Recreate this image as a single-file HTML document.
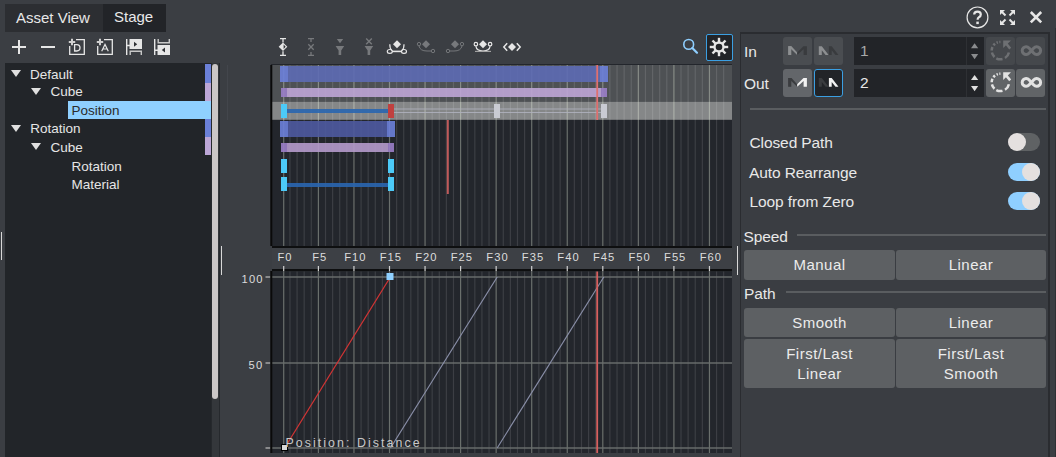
<!DOCTYPE html>
<html><head><meta charset="utf-8">
<style>
html,body{margin:0;padding:0;}
body{width:1056px;height:457px;overflow:hidden;position:relative;background:#3b3e43;font-family:"Liberation Sans",sans-serif;color:#e6e6e6;}
.a{position:absolute;}
.t{position:absolute;white-space:nowrap;line-height:1;}
.tab{position:absolute;top:4px;height:28px;}
.mono{font-family:"Liberation Mono",monospace;}
.btn{position:absolute;background:#5d6063;border-radius:3px;color:#ececec;font-size:15px;text-align:center;line-height:19px;}
.lbl{position:absolute;font-size:15.5px;color:#e8e8e8;white-space:nowrap;line-height:1;letter-spacing:-0.1px;}
.tgl{position:absolute;width:32px;height:18px;border-radius:9px;left:1008px;}
.knob{position:absolute;top:0;width:18px;height:18px;border-radius:9px;background:#e4e0df;}
.tree{position:absolute;font-size:13.5px;color:#e6e6e6;white-space:nowrap;line-height:1;}
.tri{position:absolute;width:0;height:0;border-left:5.6px solid transparent;border-right:5.6px solid transparent;border-top:7.3px solid #e0e0e0;}
.mb{position:absolute;width:29px;height:28px;border-radius:3px;background:#4a4d51;}
</style></head><body>

<div class="tab" style="left:5px;width:98px;background:#2c2e32;"></div>
<div class="tab" style="left:103px;width:63px;background:#222428;"></div>
<div class="t" style="left:16px;top:9.5px;font-size:15px;color:#e8e8e8;">Asset View</div>
<div class="t" style="left:114px;top:9.3px;font-size:15px;color:#e8e8e8;">Stage</div>
<svg class="a" style="left:0;top:0" width="180" height="64" viewBox="0 0 180 64" fill="none" stroke="#e6e6e6">
<path d="M12 47H26M19 40V54" stroke-width="2"/>
<path d="M41 47H55" stroke-width="2"/>
<path d="M76 39.7H84.3V54.3H69.7V46" stroke-width="1.3"/>
<path d="M68.8 42H75.2M72 38.8V45.2" stroke-width="2" stroke="#d0d0d0"/>
<path d="M74.6 44.7H76.8Q80 44.7 80 47.85Q80 51 76.8 51H74.6Z" stroke-width="1.3"/>
<path d="M104 39.7H112.3V54.3H97.7V46" stroke-width="1.3"/>
<path d="M96.8 42H103.2M100 38.8V45.2" stroke-width="2" stroke="#d0d0d0"/>
<path d="M101.7 51.3L105 44.4L108.3 51.3M102.8 49H107.2" stroke-width="1.2"/>
<path d="M126.7 39V55M127 45.5H130" stroke-width="1.4"/>
<rect x="129.5" y="39" width="12.5" height="10" fill="#e6e6e6" stroke="none"/>
<path d="M134 41.8L137.2 44.3L134 46.8Z" fill="#2e3034" stroke="none"/>
<path d="M130.2 55V51.2H141.3V55" stroke-width="1.4" stroke="#c8c8c8"/>
<path d="M154.7 39V55M155 50.2H158" stroke-width="1.4"/>
<rect x="157.5" y="45" width="12.5" height="10" fill="#e6e6e6" stroke="none"/>
<path d="M165 47.6L161.8 50.1L165 52.6Z" fill="#2e3034" stroke="none"/>
<path d="M158.2 39V42.8H169.3V39" stroke-width="1.4" stroke="#c8c8c8"/>
</svg>
<svg class="a" style="left:260px;top:30px" width="480" height="34" viewBox="260 30 480 34" fill="none">
<g stroke="#e6e6e6" stroke-width="1.3">
<path d="M280 38.6H286M283 38.6V42.5M283 51.2V55.4M280 55.4H286"/>
</g>
<path d="M283 42.5L287.3 46.8L283 51.1L278.7 46.8Z" fill="#e6e6e6"/>
<path d="M283.6 44.6L285.6 46.8L283.6 49Z" fill="#2e3034"/>
<g stroke="#77797c" stroke-width="1.3">
<path d="M308 38.6H314M311 38.6V42M311 52V55.4M308 55.4H314M308.3 44.2L313.7 49.8M313.7 44.2L308.3 49.8"/>
</g>
<path d="M336.8 39H343.2L340 43.2Z" fill="#77797c"/>
<path d="M335.6 46H344.2L341.2 50.4V55H338.6V50.4Z" fill="#77797c"/>
<path d="M366.2 38.6L371.8 44.2M371.8 38.6L366.2 44.2" stroke="#77797c" stroke-width="1.4"/>
<path d="M364.6 46H373.2L370.2 50.4V55H367.6V50.4Z" fill="#77797c"/>
<path d="M397 40.2L401 44.2L397 48.2L393 44.2Z" fill="#e6e6e6"/>
<g stroke="#e6e6e6" stroke-width="1.2">
<path d="M389.8 44.2Q389.6 48.5 392 50.6M404 44.2Q404.2 48.5 401.8 50.6"/>
<path d="M392 51.4H401.8" stroke-width="1.6"/>
<ellipse cx="389.8" cy="51.4" rx="2.5" ry="1.9"/>
<ellipse cx="404" cy="51.4" rx="2.5" ry="1.9"/>
</g>
<path d="M426 40.2L430 44.2L426 48.2L422 44.2Z" fill="#77797c"/>
<g stroke="#77797c" stroke-width="0.95">
<circle cx="419" cy="44.1" r="1.7"/>
<circle cx="433" cy="51" r="1.7"/>
<path d="M419 46Q420 51 427 51H431"/>
</g>
<path d="M455 40.2L459 44.2L455 48.2L451 44.2Z" fill="#77797c"/>
<g stroke="#77797c" stroke-width="0.95">
<circle cx="462" cy="44.1" r="1.7"/>
<circle cx="448" cy="51" r="1.7"/>
<path d="M462 46Q461 51 454 51H450"/>
</g>
<path d="M483 40.2L487 44.2L483 48.2L479 44.2Z" fill="#e6e6e6"/>
<g stroke="#e6e6e6" stroke-width="1.2">
<circle cx="475.9" cy="44.2" r="1.75"/>
<circle cx="490.1" cy="44.2" r="1.75"/>
<path d="M475.9 46.1Q476.5 51 483 51Q489.5 51 490.1 46.1"/>
</g>
<path d="M475 51.4H491" stroke="#a8a8a8" stroke-width="1.1"/>
<path d="M507.2 43.2L503.8 47L507.2 50.8M516.8 43.2L520.2 47L516.8 50.8" stroke="#e6e6e6" stroke-width="1.5"/>
<path d="M512 43L516 47L512 51L508 47Z" fill="#e6e6e6"/>
<circle cx="688.7" cy="44.4" r="4.9" stroke="#8fcfff" stroke-width="1.6"/>
<path d="M692.3 48L697 52.7" stroke="#8fcfff" stroke-width="2.2" stroke-linecap="round"/>
</svg>
<div class="a" style="left:5px;top:63px;width:214px;height:394px;background:#222529;"></div>
<div class="a" style="left:205px;top:64px;width:6px;height:19px;background:#6b80d8;"></div>
<div class="a" style="left:205px;top:83px;width:6px;height:36px;background:#bca6d6;"></div>
<div class="a" style="left:205px;top:119px;width:6px;height:18px;background:#6b80d8;"></div>
<div class="a" style="left:205px;top:137px;width:6px;height:18px;background:#bca6d6;"></div>
<div class="a" style="left:68px;top:101px;width:143px;height:18px;background:#8fd0ff;"></div>
<div class="a" style="left:211px;top:63px;width:7px;height:394px;background:#34373b;border-left:1px solid #26292d;border-right:1px solid #26292d;"></div>
<div class="a" style="left:212px;top:64px;width:6px;height:335px;background:#cac6c6;border-radius:3px;"></div>
<div class="tri" style="left:10.5px;top:70.3px;"></div>
<div class="tree" style="left:30px;top:67.57px;">Default</div>
<div class="tri" style="left:31px;top:88px;"></div>
<div class="tree" style="left:50.5px;top:85.07px;">Cube</div>
<div class="tree" style="left:71.5px;top:104.17px;color:#2b2b2b;">Position</div>
<div class="tri" style="left:10.6px;top:124.9px;"></div>
<div class="tree" style="left:30.2px;top:122.37px;">Rotation</div>
<div class="tri" style="left:30.8px;top:143.2px;"></div>
<div class="tree" style="left:50.6px;top:140.57px;">Cube</div>
<div class="tree" style="left:71.6px;top:159.97px;">Rotation</div>
<div class="tree" style="left:71.6px;top:177.87px;">Material</div>
<div class="a" style="left:227px;top:65px;width:1px;height:55px;background:#43464c;"></div>
<div class="a" style="left:1px;top:232px;width:1px;height:28px;background:#d8d8d8;"></div>
<div class="a" style="left:221px;top:246px;width:1px;height:29px;background:#d8d8d8;"></div>
<div class="a" style="left:737px;top:246px;width:1px;height:29px;background:#d8d8d8;"></div>
<svg class="a" style="left:0;top:0" width="1056" height="457" viewBox="0 0 1056 457">
<rect x="271" y="64" width="461" height="182" fill="#23262c"/>
<rect x="272" y="65" width="460" height="36" fill="#4e5154"/>
<rect x="272" y="101.5" width="460" height="18.3" fill="#858788"/>
<rect x="283.10" y="65" width="1.2" height="181" fill="#f2fbe8" opacity="0.34"/>
<rect x="289.36" y="65" width="1.2" height="181" fill="#fff" opacity="0.115"/>
<rect x="296.47" y="65" width="1.2" height="181" fill="#fff" opacity="0.115"/>
<rect x="303.58" y="65" width="1.2" height="181" fill="#fff" opacity="0.115"/>
<rect x="310.69" y="65" width="1.2" height="181" fill="#fff" opacity="0.115"/>
<rect x="317.80" y="65" width="1.2" height="181" fill="#f2fbe8" opacity="0.34"/>
<rect x="324.91" y="65" width="1.2" height="181" fill="#fff" opacity="0.115"/>
<rect x="332.02" y="65" width="1.2" height="181" fill="#fff" opacity="0.115"/>
<rect x="339.13" y="65" width="1.2" height="181" fill="#fff" opacity="0.115"/>
<rect x="346.24" y="65" width="1.2" height="181" fill="#fff" opacity="0.115"/>
<rect x="353.35" y="65" width="1.2" height="181" fill="#f2fbe8" opacity="0.34"/>
<rect x="360.46" y="65" width="1.2" height="181" fill="#fff" opacity="0.115"/>
<rect x="367.57" y="65" width="1.2" height="181" fill="#fff" opacity="0.115"/>
<rect x="374.68" y="65" width="1.2" height="181" fill="#fff" opacity="0.115"/>
<rect x="381.79" y="65" width="1.2" height="181" fill="#fff" opacity="0.115"/>
<rect x="388.90" y="65" width="1.2" height="181" fill="#f2fbe8" opacity="0.34"/>
<rect x="396.01" y="65" width="1.2" height="181" fill="#fff" opacity="0.115"/>
<rect x="403.12" y="65" width="1.2" height="181" fill="#fff" opacity="0.115"/>
<rect x="410.23" y="65" width="1.2" height="181" fill="#fff" opacity="0.115"/>
<rect x="417.34" y="65" width="1.2" height="181" fill="#fff" opacity="0.115"/>
<rect x="424.45" y="65" width="1.2" height="181" fill="#f2fbe8" opacity="0.34"/>
<rect x="431.56" y="65" width="1.2" height="181" fill="#fff" opacity="0.115"/>
<rect x="438.67" y="65" width="1.2" height="181" fill="#fff" opacity="0.115"/>
<rect x="445.78" y="65" width="1.2" height="181" fill="#fff" opacity="0.115"/>
<rect x="452.89" y="65" width="1.2" height="181" fill="#fff" opacity="0.115"/>
<rect x="460.00" y="65" width="1.2" height="181" fill="#f2fbe8" opacity="0.34"/>
<rect x="467.11" y="65" width="1.2" height="181" fill="#fff" opacity="0.115"/>
<rect x="474.22" y="65" width="1.2" height="181" fill="#fff" opacity="0.115"/>
<rect x="481.33" y="65" width="1.2" height="181" fill="#fff" opacity="0.115"/>
<rect x="488.44" y="65" width="1.2" height="181" fill="#fff" opacity="0.115"/>
<rect x="495.55" y="65" width="1.2" height="181" fill="#f2fbe8" opacity="0.34"/>
<rect x="502.66" y="65" width="1.2" height="181" fill="#fff" opacity="0.115"/>
<rect x="509.77" y="65" width="1.2" height="181" fill="#fff" opacity="0.115"/>
<rect x="516.88" y="65" width="1.2" height="181" fill="#fff" opacity="0.115"/>
<rect x="523.99" y="65" width="1.2" height="181" fill="#fff" opacity="0.115"/>
<rect x="531.10" y="65" width="1.2" height="181" fill="#f2fbe8" opacity="0.34"/>
<rect x="538.21" y="65" width="1.2" height="181" fill="#fff" opacity="0.115"/>
<rect x="545.32" y="65" width="1.2" height="181" fill="#fff" opacity="0.115"/>
<rect x="552.43" y="65" width="1.2" height="181" fill="#fff" opacity="0.115"/>
<rect x="559.54" y="65" width="1.2" height="181" fill="#fff" opacity="0.115"/>
<rect x="566.65" y="65" width="1.2" height="181" fill="#f2fbe8" opacity="0.34"/>
<rect x="573.76" y="65" width="1.2" height="181" fill="#fff" opacity="0.115"/>
<rect x="580.87" y="65" width="1.2" height="181" fill="#fff" opacity="0.115"/>
<rect x="587.98" y="65" width="1.2" height="181" fill="#fff" opacity="0.115"/>
<rect x="595.09" y="65" width="1.2" height="181" fill="#fff" opacity="0.115"/>
<rect x="602.20" y="65" width="1.2" height="181" fill="#f2fbe8" opacity="0.34"/>
<rect x="609.31" y="65" width="1.2" height="181" fill="#fff" opacity="0.115"/>
<rect x="616.42" y="65" width="1.2" height="181" fill="#fff" opacity="0.115"/>
<rect x="623.53" y="65" width="1.2" height="181" fill="#fff" opacity="0.115"/>
<rect x="630.64" y="65" width="1.2" height="181" fill="#fff" opacity="0.115"/>
<rect x="637.75" y="65" width="1.2" height="181" fill="#f2fbe8" opacity="0.34"/>
<rect x="644.86" y="65" width="1.2" height="181" fill="#fff" opacity="0.115"/>
<rect x="651.97" y="65" width="1.2" height="181" fill="#fff" opacity="0.115"/>
<rect x="659.08" y="65" width="1.2" height="181" fill="#fff" opacity="0.115"/>
<rect x="666.19" y="65" width="1.2" height="181" fill="#fff" opacity="0.115"/>
<rect x="673.30" y="65" width="1.2" height="181" fill="#f2fbe8" opacity="0.34"/>
<rect x="680.41" y="65" width="1.2" height="181" fill="#fff" opacity="0.115"/>
<rect x="687.52" y="65" width="1.2" height="181" fill="#fff" opacity="0.115"/>
<rect x="694.63" y="65" width="1.2" height="181" fill="#fff" opacity="0.115"/>
<rect x="701.74" y="65" width="1.2" height="181" fill="#fff" opacity="0.115"/>
<rect x="708.85" y="65" width="1.2" height="181" fill="#f2fbe8" opacity="0.34"/>
<rect x="715.96" y="65" width="1.2" height="181" fill="#fff" opacity="0.115"/>
<rect x="723.07" y="65" width="1.2" height="181" fill="#fff" opacity="0.115"/>
<rect x="270.3" y="65" width="2" height="181" fill="#0a0a0a"/>
<g opacity="0.9">
<rect x="280" y="66" width="328" height="16" fill="#5d6bb4"/>
<rect x="280" y="66" width="8" height="16" fill="#6c80da"/>
<rect x="600" y="66" width="8" height="16" fill="#6c80da"/>
<rect x="281" y="88" width="326" height="9" fill="#bfa6d6"/>
<rect x="281" y="88" width="6" height="9" fill="#9b7fc8"/>
<rect x="601" y="88" width="6" height="9" fill="#9b7fc8"/>
<rect x="280" y="121" width="115" height="16" fill="#4e5aa0"/>
<rect x="280" y="121" width="8" height="16" fill="#6c80da"/>
<rect x="387" y="121" width="8" height="16" fill="#6c80da"/>
<rect x="281" y="143" width="112" height="9" fill="#b59bcc"/>
<rect x="281" y="143" width="6" height="9" fill="#9b7fc8"/>
<rect x="388" y="143" width="6" height="9" fill="#9b7fc8"/>
<rect x="287" y="109" width="101" height="4" fill="#2a66b0"/>
<rect x="287" y="183" width="101" height="4" fill="#2a66b0"/>
<rect x="393" y="108.5" width="208" height="1" fill="#aeb0bc"/>
<rect x="393" y="112" width="208" height="1" fill="#aeb0bc"/>
</g>
<rect x="281" y="104" width="6" height="14" fill="#4ccaf8"/>
<rect x="388" y="104" width="6" height="14" fill="#c0403f"/>
<rect x="494" y="104" width="6" height="14" fill="#c9cbd3"/>
<rect x="601" y="104" width="6" height="14" fill="#c9cbd3"/>
<rect x="281" y="159" width="6" height="14" fill="#4ccaf8"/>
<rect x="388" y="159" width="6" height="14" fill="#4ccaf8"/>
<rect x="281" y="177" width="6" height="14" fill="#4ccaf8"/>
<rect x="388" y="177" width="6" height="14" fill="#4ccaf8"/>
<rect x="596.3" y="65" width="1.8" height="55" fill="#e0706f"/>
<rect x="446.8" y="120" width="2" height="74" fill="#c05a5a"/>
<rect x="272" y="246" width="460" height="2" fill="#0e0f10"/>
<rect x="272" y="248" width="460" height="21" fill="#3d4045"/>
<rect x="272" y="269" width="460" height="2.5" fill="#0e0f10"/>
<rect x="283.10" y="266" width="1.2" height="5.5" fill="#cfcfcf"/>
<rect x="317.80" y="266" width="1.2" height="5.5" fill="#cfcfcf"/>
<rect x="353.35" y="266" width="1.2" height="5.5" fill="#cfcfcf"/>
<rect x="388.90" y="266" width="1.2" height="5.5" fill="#cfcfcf"/>
<rect x="424.45" y="266" width="1.2" height="5.5" fill="#cfcfcf"/>
<rect x="460.00" y="266" width="1.2" height="5.5" fill="#cfcfcf"/>
<rect x="495.55" y="266" width="1.2" height="5.5" fill="#cfcfcf"/>
<rect x="531.10" y="266" width="1.2" height="5.5" fill="#cfcfcf"/>
<rect x="566.65" y="266" width="1.2" height="5.5" fill="#cfcfcf"/>
<rect x="602.20" y="266" width="1.2" height="5.5" fill="#cfcfcf"/>
<rect x="637.75" y="266" width="1.2" height="5.5" fill="#cfcfcf"/>
<rect x="673.30" y="266" width="1.2" height="5.5" fill="#cfcfcf"/>
<rect x="708.85" y="266" width="1.2" height="5.5" fill="#cfcfcf"/>
</svg>
<div class="t" style="left:265.0px;width:40px;text-align:center;top:252px;font-size:11.2px;letter-spacing:1px;color:#dcdcdc;">F0</div>
<div class="t" style="left:299.7px;width:40px;text-align:center;top:252px;font-size:11.2px;letter-spacing:1px;color:#dcdcdc;">F5</div>
<div class="t" style="left:335.3px;width:40px;text-align:center;top:252px;font-size:11.2px;letter-spacing:1px;color:#dcdcdc;">F10</div>
<div class="t" style="left:370.8px;width:40px;text-align:center;top:252px;font-size:11.2px;letter-spacing:1px;color:#dcdcdc;">F15</div>
<div class="t" style="left:406.4px;width:40px;text-align:center;top:252px;font-size:11.2px;letter-spacing:1px;color:#dcdcdc;">F20</div>
<div class="t" style="left:441.9px;width:40px;text-align:center;top:252px;font-size:11.2px;letter-spacing:1px;color:#dcdcdc;">F25</div>
<div class="t" style="left:477.5px;width:40px;text-align:center;top:252px;font-size:11.2px;letter-spacing:1px;color:#dcdcdc;">F30</div>
<div class="t" style="left:513.0px;width:40px;text-align:center;top:252px;font-size:11.2px;letter-spacing:1px;color:#dcdcdc;">F35</div>
<div class="t" style="left:548.5px;width:40px;text-align:center;top:252px;font-size:11.2px;letter-spacing:1px;color:#dcdcdc;">F40</div>
<div class="t" style="left:584.1px;width:40px;text-align:center;top:252px;font-size:11.2px;letter-spacing:1px;color:#dcdcdc;">F45</div>
<div class="t" style="left:619.6px;width:40px;text-align:center;top:252px;font-size:11.2px;letter-spacing:1px;color:#dcdcdc;">F50</div>
<div class="t" style="left:655.2px;width:40px;text-align:center;top:252px;font-size:11.2px;letter-spacing:1px;color:#dcdcdc;">F55</div>
<div class="t" style="left:690.8px;width:40px;text-align:center;top:252px;font-size:11.2px;letter-spacing:1px;color:#dcdcdc;">F60</div>
<svg class="a" style="left:0;top:0" width="1056" height="457" viewBox="0 0 1056 457">
<rect x="272" y="271.5" width="460" height="181.5" fill="#23262c"/>
<rect x="283.10" y="271.5" width="1.2" height="181.5" fill="#f2fbe8" opacity="0.34"/>
<rect x="289.36" y="271.5" width="1.2" height="181.5" fill="#fff" opacity="0.115"/>
<rect x="296.47" y="271.5" width="1.2" height="181.5" fill="#fff" opacity="0.115"/>
<rect x="303.58" y="271.5" width="1.2" height="181.5" fill="#fff" opacity="0.115"/>
<rect x="310.69" y="271.5" width="1.2" height="181.5" fill="#fff" opacity="0.115"/>
<rect x="317.80" y="271.5" width="1.2" height="181.5" fill="#f2fbe8" opacity="0.34"/>
<rect x="324.91" y="271.5" width="1.2" height="181.5" fill="#fff" opacity="0.115"/>
<rect x="332.02" y="271.5" width="1.2" height="181.5" fill="#fff" opacity="0.115"/>
<rect x="339.13" y="271.5" width="1.2" height="181.5" fill="#fff" opacity="0.115"/>
<rect x="346.24" y="271.5" width="1.2" height="181.5" fill="#fff" opacity="0.115"/>
<rect x="353.35" y="271.5" width="1.2" height="181.5" fill="#f2fbe8" opacity="0.34"/>
<rect x="360.46" y="271.5" width="1.2" height="181.5" fill="#fff" opacity="0.115"/>
<rect x="367.57" y="271.5" width="1.2" height="181.5" fill="#fff" opacity="0.115"/>
<rect x="374.68" y="271.5" width="1.2" height="181.5" fill="#fff" opacity="0.115"/>
<rect x="381.79" y="271.5" width="1.2" height="181.5" fill="#fff" opacity="0.115"/>
<rect x="388.90" y="271.5" width="1.2" height="181.5" fill="#f2fbe8" opacity="0.34"/>
<rect x="396.01" y="271.5" width="1.2" height="181.5" fill="#fff" opacity="0.115"/>
<rect x="403.12" y="271.5" width="1.2" height="181.5" fill="#fff" opacity="0.115"/>
<rect x="410.23" y="271.5" width="1.2" height="181.5" fill="#fff" opacity="0.115"/>
<rect x="417.34" y="271.5" width="1.2" height="181.5" fill="#fff" opacity="0.115"/>
<rect x="424.45" y="271.5" width="1.2" height="181.5" fill="#f2fbe8" opacity="0.34"/>
<rect x="431.56" y="271.5" width="1.2" height="181.5" fill="#fff" opacity="0.115"/>
<rect x="438.67" y="271.5" width="1.2" height="181.5" fill="#fff" opacity="0.115"/>
<rect x="445.78" y="271.5" width="1.2" height="181.5" fill="#fff" opacity="0.115"/>
<rect x="452.89" y="271.5" width="1.2" height="181.5" fill="#fff" opacity="0.115"/>
<rect x="460.00" y="271.5" width="1.2" height="181.5" fill="#f2fbe8" opacity="0.34"/>
<rect x="467.11" y="271.5" width="1.2" height="181.5" fill="#fff" opacity="0.115"/>
<rect x="474.22" y="271.5" width="1.2" height="181.5" fill="#fff" opacity="0.115"/>
<rect x="481.33" y="271.5" width="1.2" height="181.5" fill="#fff" opacity="0.115"/>
<rect x="488.44" y="271.5" width="1.2" height="181.5" fill="#fff" opacity="0.115"/>
<rect x="495.55" y="271.5" width="1.2" height="181.5" fill="#f2fbe8" opacity="0.34"/>
<rect x="502.66" y="271.5" width="1.2" height="181.5" fill="#fff" opacity="0.115"/>
<rect x="509.77" y="271.5" width="1.2" height="181.5" fill="#fff" opacity="0.115"/>
<rect x="516.88" y="271.5" width="1.2" height="181.5" fill="#fff" opacity="0.115"/>
<rect x="523.99" y="271.5" width="1.2" height="181.5" fill="#fff" opacity="0.115"/>
<rect x="531.10" y="271.5" width="1.2" height="181.5" fill="#f2fbe8" opacity="0.34"/>
<rect x="538.21" y="271.5" width="1.2" height="181.5" fill="#fff" opacity="0.115"/>
<rect x="545.32" y="271.5" width="1.2" height="181.5" fill="#fff" opacity="0.115"/>
<rect x="552.43" y="271.5" width="1.2" height="181.5" fill="#fff" opacity="0.115"/>
<rect x="559.54" y="271.5" width="1.2" height="181.5" fill="#fff" opacity="0.115"/>
<rect x="566.65" y="271.5" width="1.2" height="181.5" fill="#f2fbe8" opacity="0.34"/>
<rect x="573.76" y="271.5" width="1.2" height="181.5" fill="#fff" opacity="0.115"/>
<rect x="580.87" y="271.5" width="1.2" height="181.5" fill="#fff" opacity="0.115"/>
<rect x="587.98" y="271.5" width="1.2" height="181.5" fill="#fff" opacity="0.115"/>
<rect x="595.09" y="271.5" width="1.2" height="181.5" fill="#fff" opacity="0.115"/>
<rect x="602.20" y="271.5" width="1.2" height="181.5" fill="#f2fbe8" opacity="0.34"/>
<rect x="609.31" y="271.5" width="1.2" height="181.5" fill="#fff" opacity="0.115"/>
<rect x="616.42" y="271.5" width="1.2" height="181.5" fill="#fff" opacity="0.115"/>
<rect x="623.53" y="271.5" width="1.2" height="181.5" fill="#fff" opacity="0.115"/>
<rect x="630.64" y="271.5" width="1.2" height="181.5" fill="#fff" opacity="0.115"/>
<rect x="637.75" y="271.5" width="1.2" height="181.5" fill="#f2fbe8" opacity="0.34"/>
<rect x="644.86" y="271.5" width="1.2" height="181.5" fill="#fff" opacity="0.115"/>
<rect x="651.97" y="271.5" width="1.2" height="181.5" fill="#fff" opacity="0.115"/>
<rect x="659.08" y="271.5" width="1.2" height="181.5" fill="#fff" opacity="0.115"/>
<rect x="666.19" y="271.5" width="1.2" height="181.5" fill="#fff" opacity="0.115"/>
<rect x="673.30" y="271.5" width="1.2" height="181.5" fill="#f2fbe8" opacity="0.34"/>
<rect x="680.41" y="271.5" width="1.2" height="181.5" fill="#fff" opacity="0.115"/>
<rect x="687.52" y="271.5" width="1.2" height="181.5" fill="#fff" opacity="0.115"/>
<rect x="694.63" y="271.5" width="1.2" height="181.5" fill="#fff" opacity="0.115"/>
<rect x="701.74" y="271.5" width="1.2" height="181.5" fill="#fff" opacity="0.115"/>
<rect x="708.85" y="271.5" width="1.2" height="181.5" fill="#f2fbe8" opacity="0.34"/>
<rect x="715.96" y="271.5" width="1.2" height="181.5" fill="#fff" opacity="0.115"/>
<rect x="723.07" y="271.5" width="1.2" height="181.5" fill="#fff" opacity="0.115"/>
<rect x="272" y="276.3" width="460" height="1.4" fill="#6c6f6e"/>
<rect x="265.5" y="276.4" width="5" height="1.2" fill="#bdbdbd"/>
<rect x="272" y="362.3" width="460" height="1.4" fill="#6c6f6e"/>
<rect x="265.5" y="362.4" width="5" height="1.2" fill="#bdbdbd"/>
<rect x="272" y="447.3" width="460" height="1.4" fill="#6c6f6e"/>
<rect x="265.5" y="447.4" width="5" height="1.2" fill="#bdbdbd"/>
<rect x="270.3" y="271" width="2" height="182" fill="#0a0a0a"/>
<line x1="284.6" y1="448" x2="390.4" y2="277" stroke="#d23434" stroke-width="1.25"/>
<line x1="390.5" y1="448" x2="497.2" y2="277" stroke="#8a8fa8" stroke-width="1.15"/>
<line x1="497.2" y1="448" x2="603.8" y2="277" stroke="#8a8fa8" stroke-width="1.15"/>
<rect x="596.3" y="271.5" width="1.8" height="181.5" fill="#d8605f"/>
<rect x="386.5" y="273" width="7" height="7" fill="#8fd0ff"/>
<rect x="281.5" y="444.5" width="6" height="6" fill="#d8d8d8" stroke="#000" stroke-width="1"/>
</svg>
<div class="t" style="left:241.5px;top:274px;font-size:11.2px;letter-spacing:1.2px;color:#dcdcdc;">100</div>
<div class="t" style="left:248.5px;top:360px;font-size:11.2px;letter-spacing:1.2px;color:#dcdcdc;">50</div>
<div class="t" style="left:285.5px;top:436.8px;font-size:12.4px;letter-spacing:2.05px;color:#c8c8c8;">Position: Distance</div>
<div class="a" style="left:706px;top:34px;width:25px;height:25px;border:1px solid #3b9fe2;border-radius:2px;background:#222428;"></div>
<svg class="a" style="left:700px;top:30px" width="40" height="34" viewBox="700 30 40 34">
<g fill="#e6e6e6"><rect x="717.8" y="37.8" width="2.4" height="5" transform="rotate(0 719 47)"/><rect x="717.8" y="37.8" width="2.4" height="5" transform="rotate(45 719 47)"/><rect x="717.8" y="37.8" width="2.4" height="5" transform="rotate(90 719 47)"/><rect x="717.8" y="37.8" width="2.4" height="5" transform="rotate(135 719 47)"/><rect x="717.8" y="37.8" width="2.4" height="5" transform="rotate(180 719 47)"/><rect x="717.8" y="37.8" width="2.4" height="5" transform="rotate(225 719 47)"/><rect x="717.8" y="37.8" width="2.4" height="5" transform="rotate(270 719 47)"/><rect x="717.8" y="37.8" width="2.4" height="5" transform="rotate(315 719 47)"/></g>
<circle cx="719" cy="47" r="4.5" fill="none" stroke="#e6e6e6" stroke-width="2.4"/>
</svg>
<svg class="a" style="left:960px;top:0" width="96" height="32" viewBox="960 0 96 32" fill="none" stroke="#e6e6e6">
<circle cx="977.5" cy="17.4" r="10.4" stroke-width="1.2"/>
<path d="M974.2 14.6Q974.2 11.6 977.5 11.6Q980.8 11.6 980.8 14.4Q980.8 16.2 978.9 17.2Q977.6 17.9 977.6 19.8" stroke-width="2.2"/>
<rect x="976.3" y="21.6" width="2.5" height="2.5" fill="#e6e6e6" stroke="none"/>
<g fill="#e6e6e6" stroke="none">
<path d="M1000 10H1005L1000 15Z"/><path d="M1015 10H1010L1015 15Z"/>
<path d="M1000 25H1005L1000 20Z"/><path d="M1015 25H1010L1015 20Z"/>
</g>
<path d="M1001.5 11.5L1005.5 15.5M1013.5 11.5L1009.5 15.5M1001.5 23.5L1005.5 19.5M1013.5 23.5L1009.5 19.5" stroke-width="2"/>
<path d="M1030.8 12L1041.2 22.4M1041.2 12L1030.8 22.4" stroke-width="2.6"/>
</svg>
<div class="a" style="left:740px;top:32px;width:310px;height:425px;background:#3a3d42;"></div>
<div class="a" style="left:740px;top:32px;width:310px;height:2px;background:#2a2c30;"></div>
<div class="a" style="left:740px;top:32px;width:1px;height:425px;background:#2a2c30;"></div>
<div class="a" style="left:1048px;top:32px;width:2px;height:425px;background:#2a2c30;"></div>
<div class="a" style="left:1055px;top:28px;width:1px;height:429px;background:#2e3034;"></div>
<div class="lbl" style="left:744px;top:43.6px;">In</div>
<div class="lbl" style="left:744px;top:75.6px;">Out</div>
<div class="mb" style="left:783px;top:37px;background:#4a4d51;"></div>
<div class="mb" style="left:814px;top:37px;background:#4a4d51;"></div>
<div class="mb" style="left:783px;top:69px;background:#63666a;"></div>
<div class="mb" style="left:814px;top:69px;background:#222428;border:1px solid #3b9fe2;width:27px;height:26px;"></div>
<div class="a" style="left:854px;top:37px;width:130px;height:28px;background:#222428;"></div>
<div class="a" style="left:966px;top:37px;width:1px;height:28px;background:#2e3034;"></div>
<div class="lbl" style="left:860px;top:43px;color:#a8a8a8;">1</div>
<div class="a" style="left:854px;top:69px;width:130px;height:28px;background:#222428;"></div>
<div class="a" style="left:966px;top:69px;width:1px;height:28px;background:#2e3034;"></div>
<div class="lbl" style="left:860px;top:75px;color:#e8e8e8;">2</div>
<div class="mb" style="left:986px;top:37px;background:#45484c;"></div>
<div class="mb" style="left:986px;top:69px;background:#616467;"></div>
<div class="mb" style="left:1016px;top:37px;background:#45484c;"></div>
<div class="mb" style="left:1016px;top:69px;background:#616467;"></div>
<svg class="a" style="left:780px;top:30px" width="270" height="70" viewBox="780 30 270 70">
<path d="M788.1 46.2H791.5L797.2 52.4V55.0Z" fill="#8d8f91"/><path d="M788.1 46.2V55.0H791.3V46.2Z" fill="#8d8f91"/>
<path d="M806.9 46.2H803.5L797.2 52.4V55.0L803.6 49.2V55.0H806.9Z" fill="#393b3e"/>
<path d="M818.8 46.2H821.8L828.6 55.0H825.6L821.8 50.2V55.0H818.8Z" fill="#8d8f91"/>
<path d="M828.9 46.2H831.7L838.3 54.8V55.0H835.5L831.7 50.2V55.0H828.9Z" fill="#393b3e"/>
<path d="M788.1 78H791.5L797.2 84.2V86.8Z" fill="#3a3c3f"/><path d="M788.1 78V86.8H791.3V78Z" fill="#3a3c3f"/>
<path d="M806.9 78H803.5L797.2 84.2V86.8L803.6 81V86.8H806.9Z" fill="#f2f2f2"/>
<path d="M818.8 78H821.8L828.6 86.8H825.6L821.8 82V86.8H818.8Z" fill="#3a3c3f"/>
<path d="M828.9 78H831.7L838.3 86.6V86.8H835.5L831.7 82V86.8H828.9Z" fill="#f2f2f2"/>
<path d="M974.6 43.2L978.2 48.3H971Z" fill="#8a8c8e"/><path d="M974.6 59.2L978.2 54H971Z" fill="#8a8c8e"/>
<path d="M974.6 75L978.2 80.1H971Z" fill="#e0e0e0"/><path d="M974.6 91.2L978.2 86H971Z" fill="#e0e0e0"/>
</svg>
<svg class="a" style="left:980px;top:30px" width="70" height="70" viewBox="980 30 70 70">
<path d="M1008.91 52.41A8.7 8.7 0 0 1 1005.01 57.98M1002.50 59.04A8.7 8.7 0 0 1 996.32 58.28M994.47 56.96A8.7 8.7 0 0 1 991.92 52.56M991.70 50.45A8.7 8.7 0 0 1 992.45 47.06M993.45 45.36A8.7 8.7 0 0 1 995.04 43.74M996.59 42.78A8.7 8.7 0 0 1 997.86 42.28M999.34 41.96A8.7 8.7 0 0 1 1000.40 41.90" fill="none" stroke="#6e7073" stroke-width="2.5"/>
<path d="M1003.2 40.400000000000006H1011L1003.2 48.1Z" fill="#6e7073"/>
<path d="M1005.5 42.800000000000004L1010.2 48.6" stroke="#6e7073" stroke-width="2.6"/><path d="M1031.4 50.6L1028.97 47.96A3.9 3.9 0 1 0 1028.97 53.24L1033.83 47.96A3.9 3.9 0 1 1 1033.83 53.24Z" fill="none" stroke="#6e7073" stroke-width="3" stroke-linejoin="round"/>
<path d="M1008.91 84.21A8.7 8.7 0 0 1 1005.01 89.78M1002.50 90.84A8.7 8.7 0 0 1 996.32 90.08M994.47 88.76A8.7 8.7 0 0 1 991.92 84.36M991.70 82.25A8.7 8.7 0 0 1 992.45 78.86M993.45 77.16A8.7 8.7 0 0 1 995.04 75.54M996.59 74.58A8.7 8.7 0 0 1 997.86 74.08M999.34 73.76A8.7 8.7 0 0 1 1000.40 73.70" fill="none" stroke="#e2e2e2" stroke-width="2.5"/>
<path d="M1003.2 72.2H1011L1003.2 79.9Z" fill="#e2e2e2"/>
<path d="M1005.5 74.60000000000001L1010.2 80.4" stroke="#e2e2e2" stroke-width="2.6"/><path d="M1031.4 82.4L1028.97 79.76A3.9 3.9 0 1 0 1028.97 85.04L1033.83 79.76A3.9 3.9 0 1 1 1033.83 85.04Z" fill="none" stroke="#e2e2e2" stroke-width="3" stroke-linejoin="round"/>
</svg>
<div class="a" style="left:750px;top:108px;width:296px;height:2px;background:#5a5d60;"></div>
<div class="lbl" style="left:749.5px;top:134.7px;">Closed Path</div>
<div class="lbl" style="left:749px;top:165.2px;">Auto Rearrange</div>
<div class="lbl" style="left:749.5px;top:194.3px;">Loop from Zero</div>
<div class="tgl" style="top:133px;background:#5f6264;"><div class="knob" style="left:0"></div></div>
<div class="tgl" style="top:163px;background:#8fcfff;"><div class="knob" style="left:14px"></div></div>
<div class="tgl" style="top:192px;background:#8fcfff;"><div class="knob" style="left:14px"></div></div>
<div class="lbl" style="left:743.5px;top:229px;">Speed</div>
<div class="a" style="left:797px;top:234px;width:249px;height:2px;background:#5a5d60;"></div>
<div class="lbl" style="left:744px;top:286px;">Path</div>
<div class="a" style="left:786px;top:291px;width:260px;height:2px;background:#5a5d60;"></div>
<div class="btn" style="left:744px;top:250px;width:151px;height:29.5px;"></div>
<div class="a" style="left:744px;top:255.1px;width:151px;text-align:center;font-size:15px;line-height:20px;color:#ececec;letter-spacing:0.5px;">Manual</div>
<div class="btn" style="left:896px;top:250px;width:150px;height:29.5px;"></div>
<div class="a" style="left:896px;top:255.1px;width:150px;text-align:center;font-size:15px;line-height:20px;color:#ececec;letter-spacing:0.5px;">Linear</div>
<div class="btn" style="left:744px;top:307.5px;width:151px;height:29.5px;"></div>
<div class="a" style="left:744px;top:312.6px;width:151px;text-align:center;font-size:15px;line-height:20px;color:#ececec;letter-spacing:0.5px;">Smooth</div>
<div class="btn" style="left:896px;top:307.5px;width:150px;height:29.5px;"></div>
<div class="a" style="left:896px;top:312.6px;width:150px;text-align:center;font-size:15px;line-height:20px;color:#ececec;letter-spacing:0.5px;">Linear</div>
<div class="btn" style="left:744px;top:338.5px;width:151px;height:49.5px;"></div>
<div class="a" style="left:744px;top:343.6px;width:151px;text-align:center;font-size:15px;line-height:20px;color:#ececec;letter-spacing:0.5px;">First/Last<br>Linear</div>
<div class="btn" style="left:896px;top:338.5px;width:150px;height:49.5px;"></div>
<div class="a" style="left:896px;top:343.6px;width:150px;text-align:center;font-size:15px;line-height:20px;color:#ececec;letter-spacing:0.5px;">First/Last<br>Smooth</div>
</body></html>
